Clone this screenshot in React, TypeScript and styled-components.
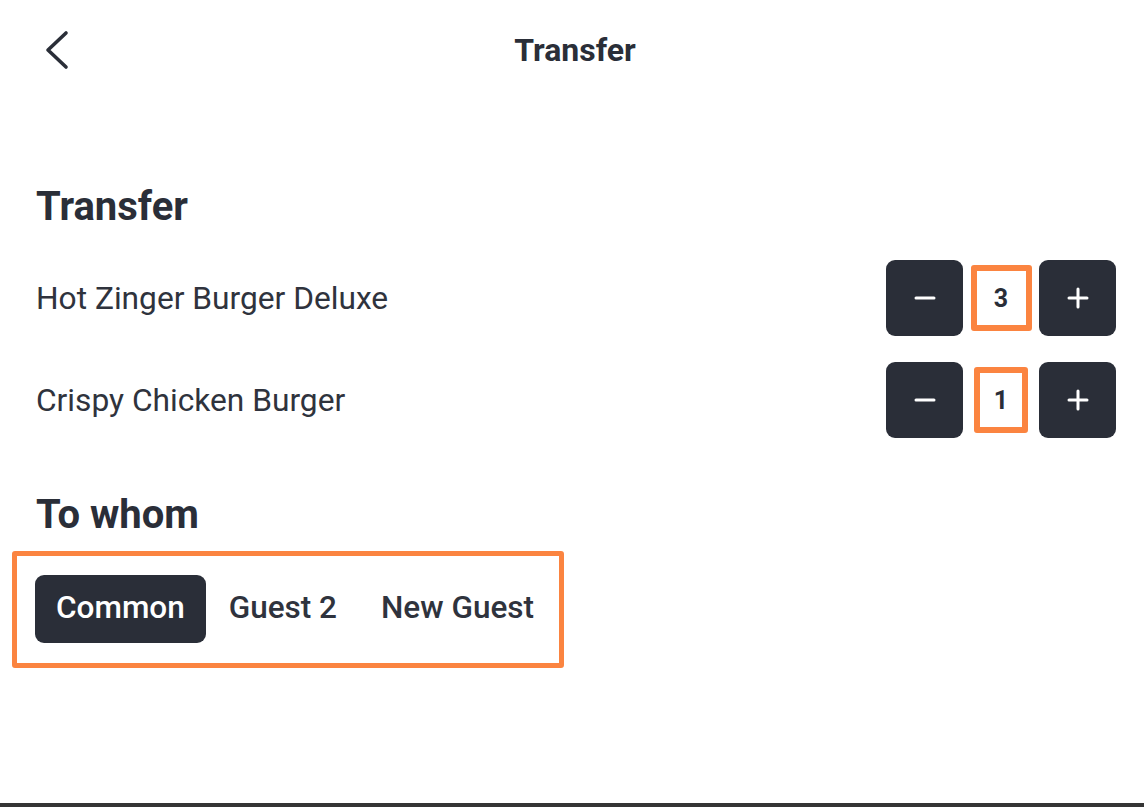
import styled, { createGlobalStyle } from "styled-components"

const GlobalStyle = createGlobalStyle`
    html, body {
        margin: 0;
        padding: 0;
        background: #fff;
    }
    body {
        font-family: Roboto, "Noto Sans", "Liberation Sans", sans-serif;
        color: #2a2e38;
    }
    * { box-sizing: border-box; }
`

const items = [
    { name: "Hot Zinger Burger Deluxe", qty: 3, boxWidth: 61 },
    { name: "Crispy Chicken Burger", qty: 1, boxWidth: 54 },
]

const guests = ["Common", "Guest 2", "New Guest"]

const MinusIcon = () => (
    <svg width="22" height="22" viewBox="0 0 22 22">
        <line x1="2" y1="11" x2="20" y2="11" stroke="#fff" strokeWidth="3" strokeLinecap="round" />
    </svg>
)

const PlusIcon = () => (
    <svg width="22" height="22" viewBox="0 0 22 22">
        <line x1="2" y1="11" x2="20" y2="11" stroke="#fff" strokeWidth="3" strokeLinecap="round" />
        <line x1="11" y1="2" x2="11" y2="20" stroke="#fff" strokeWidth="3" strokeLinecap="round" />
    </svg>
)

export default function App() {
    return (
        <Page>
            <GlobalStyle />
            <Header>
                <BackButton aria-label="Back">
                    <svg width="26" height="40" viewBox="0 0 26 40">
                        <polyline
                            points="22,3 4,20 22,37"
                            fill="none"
                            stroke="#2a2e38"
                            strokeWidth="3.6"
                            strokeLinecap="round"
                            strokeLinejoin="round"
                        />
                    </svg>
                </BackButton>
                <Title>Transfer</Title>
                <span />
            </Header>

            <Main>
                <SectionTitle>Transfer</SectionTitle>
                <ItemList>
                    {items.map((item) => (
                        <ItemRow key={item.name}>
                            <ItemName>{item.name}</ItemName>
                            <Stepper>
                                <StepButton><MinusIcon /></StepButton>
                                <QtySlot>
                                    <QtyBox style={{ width: item.boxWidth }}>{item.qty}</QtyBox>
                                </QtySlot>
                                <StepButton><PlusIcon /></StepButton>
                            </Stepper>
                        </ItemRow>
                    ))}
                </ItemList>

                <SectionTitle $spaced>To whom</SectionTitle>
                <GuestPicker>
                    {guests.map((g, i) => (
                        <GuestOption key={g} $active={i === 0}>{g}</GuestOption>
                    ))}
                </GuestPicker>
            </Main>

            <BottomBar />
        </Page>
    )
}

const Page = styled.div`
    min-height: 100vh;
    display: flex;
    flex-direction: column;
`

const Header = styled.header`
    height: 100px;
    display: grid;
    grid-template-columns: 1fr auto 1fr;
    align-items: center;
    padding: 0 36px 0 44px;
`

const BackButton = styled.button`
    justify-self: start;
    border: none;
    background: none;
    padding: 0;
    display: flex;
    cursor: pointer;
`

const Title = styled.h1`
    margin: 0;
    font-size: 32px;
    font-weight: 700;
    transform: translateX(-1px);
`

const Main = styled.main`
    padding: 84px 28px 0 36px;
    display: flex;
    flex-direction: column;
`

const SectionTitle = styled.h2<{ $spaced?: boolean }>`
    margin: ${(p) => (p.$spaced ? "54px" : "0")} 0 0;
    font-size: 40px;
    font-weight: 700;
    line-height: 46px;
`

const ItemList = styled.div`
    margin-top: 30px;
    display: flex;
    flex-direction: column;
    gap: 26px;
`

const ItemRow = styled.div`
    display: flex;
    align-items: center;
    justify-content: space-between;
`

const ItemName = styled.span`
    font-size: 31.7px;
    font-weight: 400;
    color: #2f333d;
`

const Stepper = styled.div`
    display: flex;
    align-items: center;
`

const StepButton = styled.button`
    width: 77px;
    height: 76px;
    border: none;
    border-radius: 9px;
    background: #2a2e38;
    display: flex;
    align-items: center;
    justify-content: center;
    cursor: pointer;
`

const QtySlot = styled.div`
    width: 76px;
    display: flex;
    justify-content: center;
`

const QtyBox = styled.div`
    height: 66px;
    border: 6px solid #fb8440;
    border-radius: 3px;
    display: flex;
    align-items: center;
    justify-content: center;
    font-size: 25px;
    font-weight: 700;
    color: #2a2e38;
`

const GuestPicker = styled.div`
    margin: 13px 0 0 -24px;
    width: 552px;
    padding: 19px 18px 20px;
    border: 5px solid #fb8440;
    border-radius: 3px;
    display: flex;
    align-items: center;
    gap: 2px;
`

const GuestOption = styled.button<{ $active?: boolean }>`
    flex: none;
    height: 68px;
    padding: 0 21px 4px;
    border: none;
    border-radius: 9px;
    white-space: nowrap;
    font-family: inherit;
    font-size: 31.5px;
    font-weight: 500;
    background: ${(p) => (p.$active ? "#2a2e38" : "transparent")};
    color: ${(p) => (p.$active ? "#fff" : "#2f333d")};
    cursor: pointer;
`

const BottomBar = styled.div`
    margin-top: auto;
    height: 4px;
    background: #353535;
`
